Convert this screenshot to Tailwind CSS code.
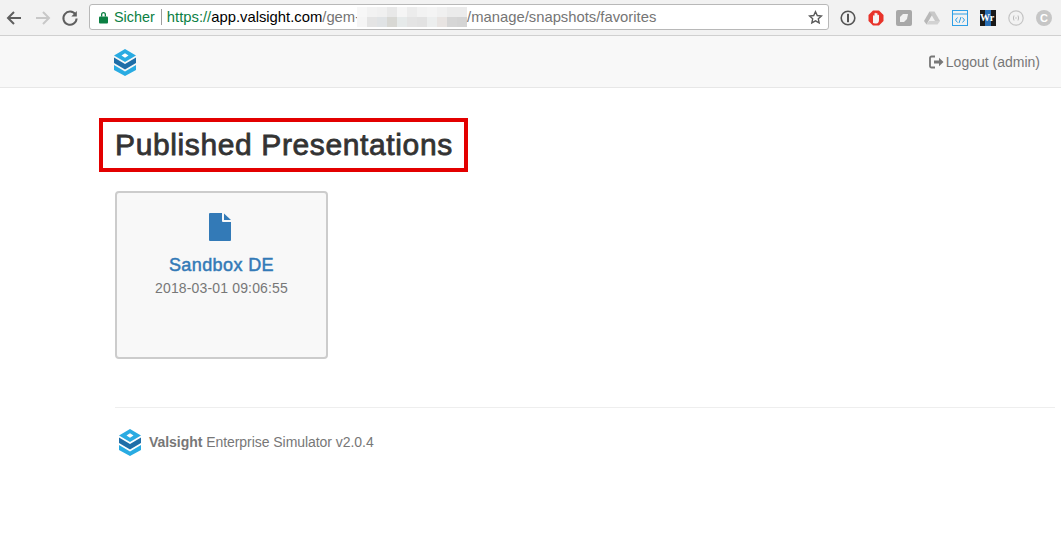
<!DOCTYPE html>
<html lang="en">
  <head>
    <meta charset="UTF-8" />
    <meta name="viewport" content="width=device-width, initial-scale=1.0" />
    <title>Published Presentations</title>
    <script src="https://cdn.jsdelivr.net/npm/@tailwindcss/browser@4"></script>
  </head>
  <body class="bg-white min-h-screen font-['Liberation_Sans',Arial,sans-serif] text-[#333] overflow-hidden">
    <!-- browser toolbar -->
    <div class="h-[36px] bg-[#f2f2f2] border-b border-[#d0d0d0] flex items-center pl-[5px]">
      <svg class="w-[18px] h-[18px] text-[#5f5f5f]" viewBox="0 0 18 18" fill="none" stroke="currentColor" stroke-width="2"><path d="M16 9H3M9 3L3 9l6 6" /></svg>
      <svg class="w-[18px] h-[18px] ml-[10px] text-[#c8c8c8]" viewBox="0 0 18 18" fill="none" stroke="currentColor" stroke-width="2"><path d="M3 9h13M10 3l6 6-6 6" /></svg>
      <svg class="w-[18px] h-[18px] ml-[10px] text-[#5f5f5f]" viewBox="0 0 18 18" fill="none" stroke="currentColor" stroke-width="2"><path d="M14.5 5.5A6.6 6.6 0 1 0 15.6 9.500" /><path d="M15.800 2v5.500h-5.500z" fill="currentColor" stroke="none" /></svg>
      <div class="ml-[10px] w-[740px] h-[26px] mt-[-1px] bg-white border border-[#b8b8b8] rounded-[3px] flex items-center pl-[8px] pr-[5px] text-[14.800px] whitespace-nowrap">
        <svg class="w-[11px] h-[13px] text-[#0b8043]" viewBox="0 0 11 13" fill="currentColor"><path d="M3 5.500V3.500a2.500 2.500 0 0 1 5 0v2h-1.300v-2a1.200 1.200 0 0 0-2.400 0v2z" /><rect x="1" y="5.500" width="9" height="7" rx="1" /></svg>
        <span class="ml-[5px] mt-[1px] text-[14.400px] text-[#0b8043]">Sicher</span>
        <span class="ml-[6px] w-px h-[16px] bg-[#9e9e9e]"></span>
        <span class="ml-[5px] text-[#0b8043]">https://</span><span class="text-black">app.valsight.com</span><span class="text-[#757575]">/gem-</span>
        <div class="w-[110px] h-[20px] ml-[-3px] grid grid-cols-11 grid-rows-2 shrink-0">
          <span class="bg-[#f7f7f7]"></span><span class="bg-[#f2f2f2]"></span><span class="bg-[#f0f0f0]"></span><span class="bg-[#e8e8e8]"></span><span class="bg-[#f5f5f5]"></span><span class="bg-[#ececec]"></span><span class="bg-[#f2f2f2]"></span><span class="bg-[#f4f4f4]"></span><span class="bg-[#f0f0f0]"></span><span class="bg-[#ebebeb]"></span><span class="bg-[#ebebeb]"></span>
          <span class="bg-[#f5f5f5]"></span><span class="bg-[#e4e4e4]"></span><span class="bg-[#e0e3e5]"></span><span class="bg-[#d8d8d4]"></span><span class="bg-[#e6eaea]"></span><span class="bg-[#e4e4e4]"></span><span class="bg-[#e2e2e2]"></span><span class="bg-[#eceeee]"></span><span class="bg-[#e8e4e2]"></span><span class="bg-[#d6d6d6]"></span><span class="bg-[#d4d4d4]"></span>
        </div>
        <span class="text-[#757575]">/manage/snapshots/favorites</span>
        <svg class="ml-auto w-[15px] h-[15px] text-[#5a5a5a]" viewBox="0 0 16 16" fill="none" stroke="currentColor" stroke-width="1.500"><path d="M8 1.800l1.900 4.100 4.400.5-3.300 3 .9 4.400L8 11.600l-3.900 2.200.9-4.400-3.300-3 4.400-.5z" /></svg>
      </div>
      <div class="ml-[11px] flex items-center gap-[12px]">
        <svg class="w-[16px] h-[16px]" viewBox="0 0 16 16"><circle cx="8" cy="8" r="6.800" fill="none" stroke="#555" stroke-width="1.600" /><rect x="7" y="3.800" width="2" height="8.400" fill="#555" /></svg>
        <svg class="w-[16px] h-[16px]" viewBox="0 0 16 16"><path d="M5 .5h6L15.500 5v6L11 15.500H5L.5 11V5z" fill="#e8332a" /><path d="M5 13V6.500c0-1.500 1.500-1.500 1.500-.3V3.800c0-1.300 1.500-1.300 1.500 0 0-1.200 1.500-1.200 1.500 0V5.500c0-1 1.500-1 1.500.3V10c0 2-1 3.500-2.500 3.500H7c-1 0-1.500-.2-2-.5z" fill="#f4f4f4" /></svg>
        <svg class="w-[16px] h-[16px]" viewBox="0 0 16 16"><rect width="16" height="16" rx="2" fill="#a8a8a8" /><path d="M4 12V7l3-3h5l-1 5-3 3z" fill="#f1f1f1" /></svg>
        <svg class="w-[16px] h-[16px]" viewBox="0 0 16 16"><path d="M5.500 1.500h5L16 11h-5z" fill="#c8c8c8" /><path d="M5.500 1.500L0 11l2.500 3.500L8 5z" fill="#b8b8b8" /><path d="M2.500 14.500h11L16 11H5z" fill="#d2d2d2" /></svg>
        <svg class="w-[16px] h-[16px]" viewBox="0 0 16 16" fill="none" stroke="#2f9fe6"><rect x=".5" y=".5" width="15" height="15" /><path d="M.5 4h15" /><path d="M5.500 7.500L3.500 10l2 2.500M10.500 7.500l2 2.500-2 2.500M9 7l-2 6" /></svg>
        <div class="w-[16px] h-[16px] bg-[#1a1a1a] relative overflow-hidden">
          <span class="absolute left-[5px] top-0 w-[6px] h-[16px] bg-[#2a6fb5]"></span>
          <span class="absolute left-0 top-[3px] text-[10px] leading-[10px] font-['Liberation_Serif',serif] font-bold text-white">Wr</span>
        </div>
        <svg class="w-[16px] h-[16px]" viewBox="0 0 16 16" fill="none"><circle cx="8" cy="8" r="7.200" stroke="#c4c4c4" stroke-width="1.200" /><path d="M6 5.500Q4.800 8 6 10.500M10 5.500q1.200 2.500 0 5" stroke="#bbb" /><path d="M7.300 8h1.400" stroke="#bbb" /></svg>
        <div class="w-[16px] h-[16px] rounded-full bg-[#c6c6c6] text-white text-[11px] font-bold leading-[16px] text-center">C</div>
      </div>
    </div>

    <!-- navbar -->
    <div class="h-[52px] pt-[1px] bg-[#f8f8f8] border-b border-[#e7e7e7] flex items-center justify-between pl-[113px] pr-[21px]">
      <svg class="w-[24px] h-[27px]" viewBox="0 0 24 27">
        <path d="M12 0l11 6.500L12 13 1 6.500z" fill="#29abe2" />
        <path d="M12 4.300l3.500 2.200L12 8.700 8.500 6.500z" fill="#fff" />
        <path d="M1 8.500l11 6.500 11-6.500V14l-11 6.500L1 14z" fill="#1f6ea8" />
        <path d="M1 16l11 6.500L23 16v5L12 27 1 21z" fill="#29abe2" />
      </svg>
      <div class="flex items-center text-[14px] text-[#777]">
        <svg class="w-[15px] h-[14px] mr-[2px]" viewBox="0 0 15 14" fill="none" stroke="currentColor" stroke-width="1.800"><path d="M6 1.500H2.500a1.500 1.500 0 0 0-1.500 1.500v8a1.500 1.500 0 0 0 1.500 1.500H6" /><path d="M5 5.500h5V2.800L14.500 7 10 11.200V8.500H5z" fill="currentColor" stroke="none" /></svg>
        Logout (admin)
      </div>
    </div>

    <!-- content -->
    <div class="pl-[115px] pr-[6px]">
      <div class="relative pt-[40px]">
        <h1 class="text-[30px] leading-[33px] font-normal tracking-[0.62px] [-webkit-text-stroke:0.8px_#333]">Published Presentations</h1>
        <div class="absolute left-[-16px] top-[30px] w-[369px] h-[54px] border-[4px] border-[#e30000]"></div>
      </div>
      <div class="mt-[30px] w-[213px] h-[168px] bg-[#f8f8f8] border-2 border-[#ccc] rounded-[4px] flex flex-col items-center pt-[20px]">
        <svg class="w-[22px] h-[28px] text-[#337ab7] mr-[3px]" viewBox="0 0 22 28" fill="currentColor"><path d="M1 0h12v8a1 1 0 0 0 1 1h8v18a1 1 0 0 1-1 1H1a1 1 0 0 1-1-1V1a1 1 0 0 1 1-1z" /><path d="M15 0.500L22 7h-7z" /></svg>
        <div class="mt-[14px] text-[18px] leading-[20px] font-normal tracking-[0.4px] [-webkit-text-stroke:0.5px_#337ab7] text-[#337ab7]">Sandbox DE</div>
        <div class="mt-[3px] text-[14px] leading-[20px] tracking-[0.15px] text-[#777]">2018-03-01 09:06:55</div>
      </div>
      <div class="mt-[48px] border-t border-[#eee] pt-[21px] pl-[3px] flex items-center">
        <svg class="w-[24px] h-[27px]" viewBox="0 0 24 27">
          <path d="M12 0l11 6.500L12 13 1 6.500z" fill="#29abe2" />
          <path d="M12 4.300l3.500 2.200L12 8.700 8.500 6.500z" fill="#fff" />
          <path d="M1 8.500l11 6.500 11-6.500V14l-11 6.500L1 14z" fill="#1f6ea8" />
          <path d="M1 16l11 6.500L23 16v5L12 27 1 21z" fill="#29abe2" />
        </svg>
        <div class="ml-[7px] text-[14px] tracking-[-0.05px] text-[#777]"><span class="font-bold">Valsight</span> Enterprise Simulator v2.0.4</div>
      </div>
    </div>
  </body>
</html>
